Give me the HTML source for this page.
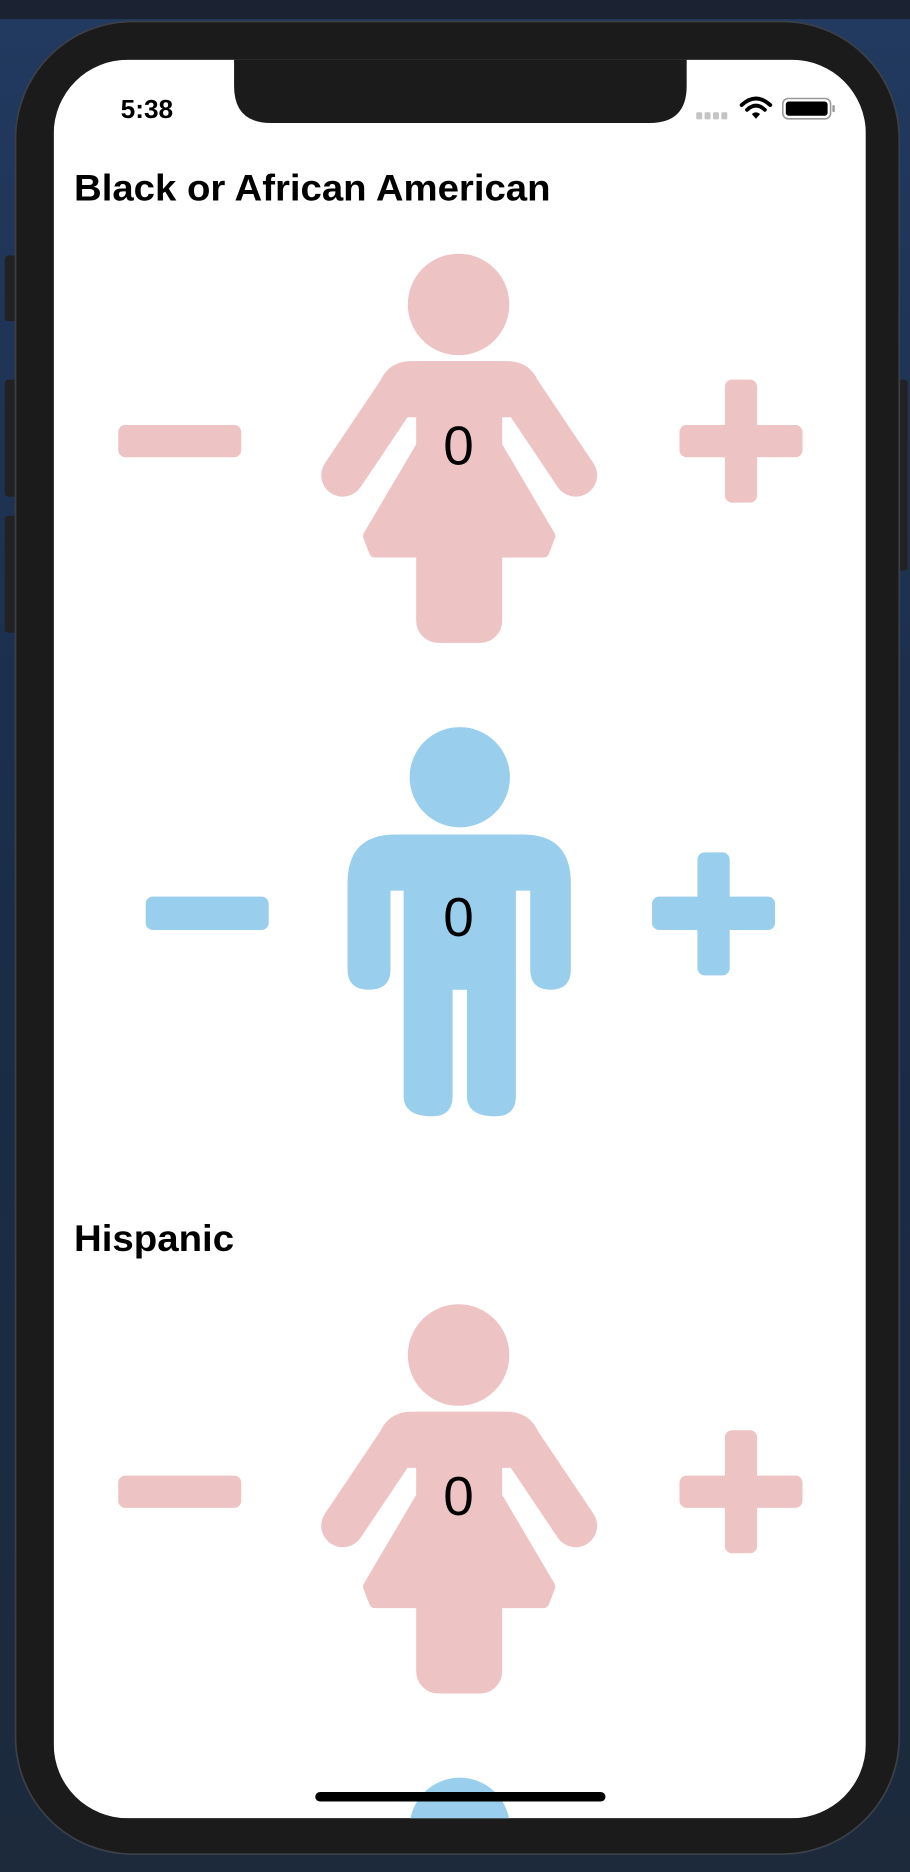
<!DOCTYPE html>
<html><head><meta charset="utf-8"><style>
html,body{margin:0;padding:0;background:#1d2b45;overflow:hidden;width:910px;height:1872px}
svg{display:block}
</style></head><body>
<svg width="910" height="1872" viewBox="0 0 762 1568" preserveAspectRatio="none" xmlns="http://www.w3.org/2000/svg">
<defs>
<linearGradient id="bg" x1="0" y1="0" x2="0" y2="1">
<stop offset="0" stop-color="#223a60"/><stop offset="0.5" stop-color="#1a2c47"/><stop offset="1" stop-color="#1c2a3c"/>
</linearGradient>
<clipPath id="scr"><rect x="45" y="50" width="680" height="1473" rx="62"/></clipPath>
<g id="woman">
<circle cx="384" cy="255" r="42"/>
<line x1="287" y1="398" x2="338" y2="322" stroke-width="36" stroke-linecap="round"/>
<line x1="482" y1="398" x2="431" y2="322" stroke-width="36" stroke-linecap="round"/>
<rect x="318" y="303" width="133" height="46" rx="26"/>
<rect x="349" y="303" width="71" height="80"/>
<polygon points="352,376 417,376 460,449 455,462 314,462 309,449" stroke-width="10" stroke-linejoin="round"/>
<rect x="349" y="440" width="71" height="98" rx="18"/>
</g>
<g id="man">
<ellipse cx="385" cy="651" rx="42" ry="42"/>
<path d="M331 699 H438 Q478 699 478 740 V812 Q478 829 461 829 Q444 829 444 812 V746 H432 V918 Q432 935 415 935 Q391 935 391 918 V829 H379 V918 Q379 935 362 935 Q338 935 338 918 V746 H327 V812 Q327 829 309 829 Q291 829 291 812 V740 Q291 699 331 699 Z"/>
</g>
</defs>
<rect x="0" y="0" width="762" height="1568" fill="url(#bg)"/>
<rect x="0" y="0" width="762" height="16" fill="#1b2333"/>
<rect x="4" y="214" width="12" height="55" rx="3" fill="#222"/>
<rect x="4" y="318" width="12" height="98" rx="3" fill="#222"/>
<rect x="4" y="432" width="12" height="98" rx="3" fill="#222"/>
<rect x="752" y="318" width="8" height="160" rx="3" fill="#222"/>
<rect x="13" y="18" width="740" height="1535" rx="98" fill="#1b1b1b" stroke="#3a3f48" stroke-width="1.5"/>
<g clip-path="url(#scr)">
<rect x="45" y="50" width="680" height="1473" fill="#fff"/>
<text x="62" y="168" font-family="Liberation Sans, sans-serif" font-weight="bold" font-size="31" textLength="399" lengthAdjust="spacingAndGlyphs" fill="#000">Black or African American</text>
<g fill="#edc3c4" stroke="#edc3c4"><use href="#woman"/></g>
<rect x="99" y="356" width="103" height="27" rx="6" fill="#edc3c4"/>
<rect x="569" y="356" width="103" height="27" rx="6" fill="#edc3c4"/>
<rect x="607" y="318" width="27" height="103" rx="6" fill="#edc3c4"/>
<text x="384" y="389" text-anchor="middle" font-family="Liberation Sans, sans-serif" font-size="46" fill="#000">0</text>
<g fill="#99ceed"><use href="#man"/></g>
<rect x="122" y="751" width="103" height="28" rx="6" fill="#99ceed"/>
<rect x="546" y="751" width="103" height="28" rx="6" fill="#99ceed"/>
<rect x="584" y="714" width="27" height="103" rx="6" fill="#99ceed"/>
<text x="384" y="784" text-anchor="middle" font-family="Liberation Sans, sans-serif" font-size="46" fill="#000">0</text>
<text x="62" y="1048" font-family="Liberation Sans, sans-serif" font-weight="bold" font-size="31" textLength="134" lengthAdjust="spacingAndGlyphs" fill="#000">Hispanic</text>
<g transform="translate(0,880)">
<g fill="#edc3c4" stroke="#edc3c4"><use href="#woman"/></g>
<rect x="99" y="356" width="103" height="27" rx="6" fill="#edc3c4"/>
<rect x="569" y="356" width="103" height="27" rx="6" fill="#edc3c4"/>
<rect x="607" y="318" width="27" height="103" rx="6" fill="#edc3c4"/>
<text x="384" y="389" text-anchor="middle" font-family="Liberation Sans, sans-serif" font-size="46" fill="#000">0</text>
<g fill="#99ceed"><use href="#man"/></g>
</g>
<rect x="264" y="1501" width="243" height="8" rx="4" fill="#000"/>
</g>
<path d="M196 50 H575 V72 Q575 103 544 103 H227 Q196 103 196 72 Z" fill="#1b1b1b"/>
<text x="101" y="99" font-family="Liberation Sans, sans-serif" font-weight="bold" font-size="22" fill="#000">5:38</text>
<g fill="#c4c4c4"><rect x="583" y="94" width="5" height="6" rx="1"/><rect x="590" y="94" width="5" height="6" rx="1"/><rect x="597" y="94" width="5" height="6" rx="1"/><rect x="604" y="94" width="5" height="6" rx="1"/></g>
<g fill="none" stroke="#000" stroke-width="3.2" stroke-linecap="round">
<path d="M621 88 Q633 77 645 88"/><path d="M625.5 92 Q633 85 640.5 92"/>
</g>
<path d="M629.5 95.5 L633 99.5 L636.5 95.5 Q633 92.5 629.5 95.5 Z" fill="#000"/>
<rect x="655.5" y="82.5" width="40" height="17" rx="4.5" fill="none" stroke="#999" stroke-width="1.3"/>
<rect x="658" y="85" width="35" height="12" rx="2.5" fill="#000"/>
<rect x="697" y="88" width="2" height="6" rx="1" fill="#999"/>
</svg>
</body></html>
